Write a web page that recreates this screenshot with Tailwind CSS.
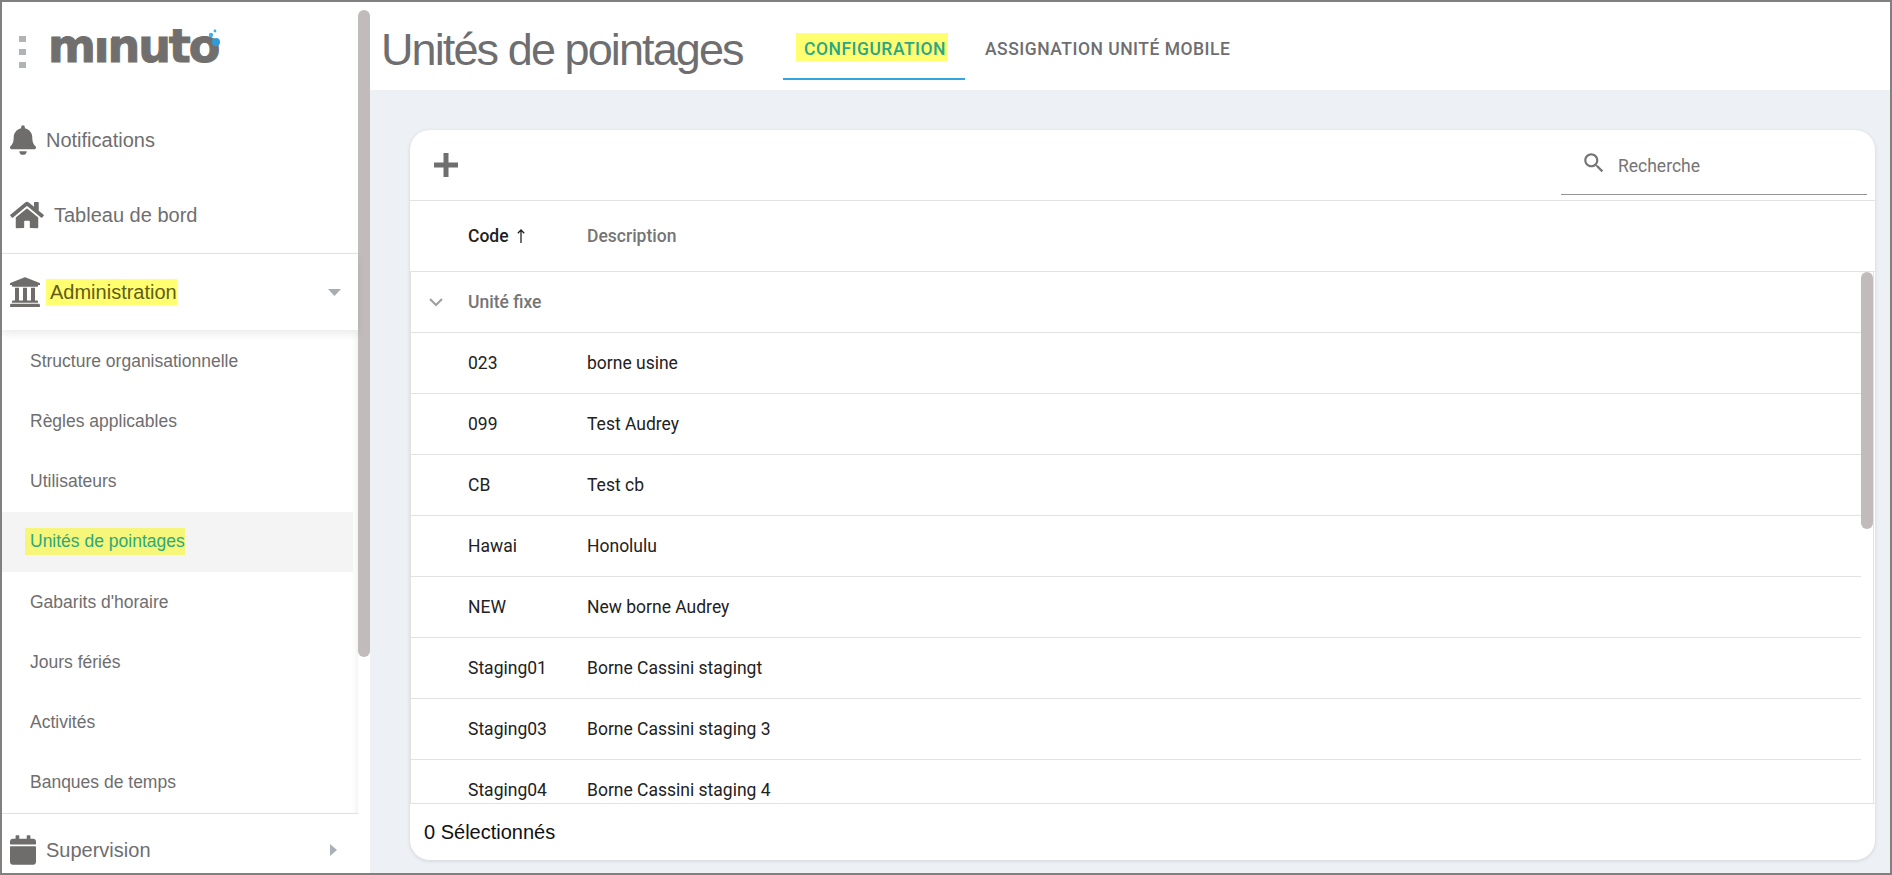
<!DOCTYPE html>
<html lang="fr">

<head>
    <meta charset="UTF-8">
    <title>Unités de pointages</title>
    <script src="https://cdn.jsdelivr.net/npm/@tailwindcss/browser@4"></script>
</head>

<body class="font-['Liberation_Sans',Arial,sans-serif]">
    <div class="w-[1892px] h-[875px] border-2 border-[#808080] flex overflow-hidden bg-white">

        <!-- sidebar -->
        <aside class="w-[368px] h-full flex shrink-0 bg-white">
            <nav class="w-[356px] flex flex-col text-[#6e6e70] text-[20px]">
                <div class="h-[100px] flex items-start relative">
                    <div class="ml-[17px] mt-[34px] flex flex-col gap-[7px]">
                        <div class="w-[7px] h-[6px] bg-[#b1b4b7]"></div>
                        <div class="w-[7px] h-[6px] bg-[#b1b4b7]"></div>
                        <div class="w-[7px] h-[6px] bg-[#b1b4b7]"></div>
                    </div>
                    <div class="ml-[22px] mt-[11px] relative w-[180px]">
                        <span class="block font-['DejaVu_Sans',sans-serif] font-bold text-[46px] leading-[66px] tracking-[-2.1px] [-webkit-text-stroke:1px_#716f6e] text-[#716f6e]">minuto</span>
                        <!-- the logo's i has no dot -->
                        <div class="absolute left-[44px] top-[10px] w-[20px] h-[15px] bg-white"></div>
                    </div>
                    <svg class="absolute left-[200px] top-[24px]" width="24" height="24" viewBox="0 0 24 24">
                        <circle cx="14" cy="16" r="4" fill="#2f9bdc"/>
                        <circle cx="9" cy="9" r="2.2" fill="#45ace4"/>
                        <circle cx="13" cy="5" r="1.4" fill="#45ace4"/>
                    </svg>
                </div>

                <a class="h-[76px] flex items-center pl-[8px]">
                    <svg class="w-[26px] h-[30px] mr-[10px]" viewBox="0 0 448 512" fill="#6e6d6c"><path d="M224 512c35.32 0 63.97-28.65 63.97-64H160.03c0 35.35 28.65 64 63.97 64zm215.39-149.71c-19.32-20.76-55.47-51.99-55.47-154.29 0-77.7-54.48-139.9-127.94-155.16V32c0-17.67-14.32-32-31.98-32s-31.98 14.33-31.98 32v20.84C118.56 68.1 64.08 130.3 64.08 208c0 102.3-36.15 133.53-55.47 154.29-6 6.45-8.66 14.16-8.61 21.71.11 16.4 12.98 32 32.1 32h383.8c19.12 0 32-15.6 32.1-32 .05-7.55-2.61-15.27-8.61-21.71z"/></svg>
                    <span>Notifications</span>
                </a>
                <a class="h-[75px] flex items-center pl-[8px] pb-[2px]">
                    <svg class="w-[34px] h-[30px] mr-[10px]" viewBox="0 0 576 512" fill="#6e6d6c"><path d="M280.37 148.26L96 300.11V464a16 16 0 0 0 16 16l112.06-.29a16 16 0 0 0 15.92-16V368a16 16 0 0 1 16-16h64a16 16 0 0 1 16 16v95.64a16 16 0 0 0 16 16.05L464 480a16 16 0 0 0 16-16V300L295.67 148.26a12.19 12.19 0 0 0-15.3 0zM571.6 251.47L488 182.56V44.05a12 12 0 0 0-12-12h-56a12 12 0 0 0-12 12v72.61L318.47 43a48 48 0 0 0-61 0L4.34 251.47a12 12 0 0 0-1.6 16.9l25.5 31A12 12 0 0 0 45.15 301l235.22-193.74a12.19 12.19 0 0 1 15.3 0L530.9 301a12 12 0 0 0 16.9-1.6l25.5-31a12 12 0 0 0-1.7-16.93z"/></svg>
                    <span>Tableau de bord</span>
                </a>

                <a class="h-[77px] flex items-center pl-[7px] border-t-[1.5px] border-[#dde3e8] relative z-10 shadow-[0_4px_8px_rgba(0,0,0,0.08)]">
                    <svg class="w-[32px] h-[34px] mr-[5px]" viewBox="0 0 512 512" preserveAspectRatio="none" fill="#6e6d6c"><path d="M496 128v16a8 8 0 0 1-8 8h-24v12c0 6.627-5.373 12-12 12H60c-6.627 0-12-5.373-12-12v-12H24a8 8 0 0 1-8-8v-16a8 8 0 0 1 4.941-7.392l232-88a7.996 7.996 0 0 1 6.118 0l232 88A8 8 0 0 1 496 128zm-24 304H40c-13.255 0-24 10.745-24 24v16a8 8 0 0 0 8 8h464a8 8 0 0 0 8-8v-16c0-13.255-10.745-24-24-24zM96 192v192H60c-6.627 0-12 5.373-12 12v20h416v-20c0-6.627-5.373-12-12-12h-36V192h-64v192h-64V192h-64v192h-64V192H96z"/></svg>
                    <span class="bg-[#ffff70] text-[#625d18] pl-[4px] h-[26px] leading-[26px]">Administration</span>
                    <svg class="ml-auto mr-[17px] w-[13px] h-[7px]" viewBox="0 0 13 7" fill="#a8adb3"><path d="M0 0h13L6.500 7z"/></svg>
                </a>

                <div class="h-[482.6px] pt-[1px] flex flex-col text-[17.5px] shadow-[inset_-6px_0_6px_-4px_rgba(0,0,0,0.06)]">
                    <a class="h-[60.2px] shrink-0 flex items-center pl-[28px]">Structure organisationnelle</a>
                    <a class="h-[60.2px] shrink-0 flex items-center pl-[28px]">Règles applicables</a>
                    <a class="h-[60.2px] shrink-0 flex items-center pl-[28px]">Utilisateurs</a>
                    <a class="h-[60.2px] shrink-0 flex items-center pl-[23px] mr-[5px] bg-[#f4f4f4]">
                        <span class="bg-[#f5f67a] text-[#2ea87c] pl-[5px] h-[27px] leading-[27px]">Unités de pointages</span>
                    </a>
                    <a class="h-[60.2px] shrink-0 flex items-center pl-[28px]">Gabarits d'horaire</a>
                    <a class="h-[60.2px] shrink-0 flex items-center pl-[28px]">Jours fériés</a>
                    <a class="h-[60.2px] shrink-0 flex items-center pl-[28px]">Activités</a>
                    <a class="h-[60.2px] shrink-0 flex items-center pl-[28px]">Banques de temps</a>
                </div>

                <a class="flex-1 flex items-start pl-[8px] pt-[21px] border-t border-[#dfe2e4]">
                    <svg class="w-[26px] h-[30px] mr-[10px]" viewBox="0 0 448 512" fill="#6e6d6c"><path d="M12 192h424c6.600 0 12 5.400 12 12v260c0 26.500-21.500 48-48 48H48c-26.500 0-48-21.500-48-48V204c0-6.600 5.400-12 12-12zm436-44v-36c0-26.500-21.500-48-48-48h-48V12c0-6.600-5.400-12-12-12h-40c-6.600 0-12 5.400-12 12v52H160V12c0-6.600-5.400-12-12-12h-40c-6.600 0-12 5.400-12 12v52H48C21.500 64 0 85.500 0 112v36c0 6.600 5.400 12 12 12h424c6.600 0 12-5.400 12-12z"/></svg>
                    <span class="leading-[30px]">Supervision</span>
                    <svg class="ml-auto mr-[21px] mt-[9px] w-[7px] h-[12px]" viewBox="0 0 7 12" fill="#a8b0b8"><path d="M0 0l7 6-7 6z"/></svg>
                </a>
            </nav>
            <div class="w-[12px] pt-[8px]">
                <div class="h-[647px] rounded-[6px] bg-[#c1bcbb]"></div>
            </div>
        </aside>

        <!-- main -->
        <main class="flex-1 flex flex-col bg-[#edf0f5] min-w-0">
            <header class="h-[88px] bg-white flex items-start shrink-0 pl-[11px] relative">
                <h1 class="w-[402px] mt-[19px] text-[45px] leading-[58px] tracking-[-1.9px] text-[#6e6e70] whitespace-nowrap">Unités de pointages</h1>
                <div class="flex font-['Roboto',sans-serif] font-medium text-[17.5px]">
                    <div class="w-[182px] h-[78px] border-b-2 border-[#35a3dc] pl-[13px] pt-[31px]">
                        <span class="inline-block bg-[#ffff70] text-[#2aa784] pl-[8px] pr-[2px] h-[28px] leading-[33px] tracking-[0.5px] whitespace-nowrap">CONFIGURATION</span>
                    </div>
                    <div class="pl-[20px] pt-[31px] h-[78px] text-[#6e6e70]">
                        <span class="inline-block h-[28px] leading-[33px] tracking-[0.5px] whitespace-nowrap">ASSIGNATION UNITÉ MOBILE</span>
                    </div>
                </div>
            </header>

            <div class="flex-1 pl-[40px] pr-[15px] pt-[40px] pb-[13px] min-h-0">
                <section class="h-full bg-white rounded-[20px] shadow-[0_1px_4px_rgba(0,0,0,0.12)] flex flex-col overflow-hidden font-['Roboto',sans-serif] text-[17.5px] text-[#222]">
                    <div class="h-[71px] shrink-0 flex items-start border-b border-[#e2e2e2]">
                        <svg class="ml-[24px] mt-[23px] w-[24px] h-[24px]" viewBox="0 0 24 24" fill="#6f6f6f"><path d="M9.500 0h5v9.500H24v5h-9.500V24h-5v-9.500H0v-5h9.500z"/></svg>
                        <div class="ml-auto mr-[8px] w-[306px] h-[65px] border-b border-[#949494] flex items-start pl-[20px] pt-[20px]">
                            <svg class="w-[26px] h-[26px] mr-[11px]" viewBox="0 0 24 24" fill="#757575"><path d="M15.500 14h-.79l-.28-.27C15.410 12.590 16 11.110 16 9.500 16 5.910 13.090 3 9.500 3S3 5.910 3 9.500 5.910 16 9.500 16c1.610 0 3.090-.59 4.230-1.570l.27.28v.79l5 4.990L20.490 19l-4.990-5zm-6 0C7.010 14 5 11.990 5 9.500S7.010 5 9.500 5 14 7.010 14 9.500 11.990 14 9.500 14z"/></svg>
                            <span class="leading-[32px] text-[#757575]">Recherche</span>
                        </div>
                    </div>

                    <div class="h-[71px] shrink-0 flex items-center border-b border-[#e2e2e2] pl-[58px] font-medium">
                        <div class="w-[119px] flex items-center text-[#222]">
                            Code
                            <svg class="ml-[8px] w-[8px] h-[14px]" viewBox="0 0 8 14" fill="none" stroke="#222" stroke-width="1.300"><path d="M4 14V1M.8 4.200 4 1l3.200 3.200"/></svg>
                        </div>
                        <div class="text-[#757575]">Description</div>
                    </div>

                    <div class="flex-1 min-h-0 flex border-x border-[#e2e2e2] mr-[1px]">
                        <div class="flex-1 min-w-0 overflow-hidden">
                            <div class="h-[61px] flex items-center border-b border-[#e2e2e2] font-medium text-[#757575]">
                                <svg class="ml-[18px] mr-[25px] w-[14px] h-[9px]" viewBox="0 0 14 9" fill="none" stroke="#9e9e9e" stroke-width="2"><path d="M1 1l6 6 6-6"/></svg>
                                Unité fixe
                            </div>
                            <div class="h-[61px] flex items-center border-b border-[#e2e2e2] pl-[57px]"><div class="w-[119px]">023</div><div>borne usine</div></div>
                            <div class="h-[61px] flex items-center border-b border-[#e2e2e2] pl-[57px]"><div class="w-[119px]">099</div><div>Test Audrey</div></div>
                            <div class="h-[61px] flex items-center border-b border-[#e2e2e2] pl-[57px]"><div class="w-[119px]">CB</div><div>Test cb</div></div>
                            <div class="h-[61px] flex items-center border-b border-[#e2e2e2] pl-[57px]"><div class="w-[119px]">Hawai</div><div>Honolulu</div></div>
                            <div class="h-[61px] flex items-center border-b border-[#e2e2e2] pl-[57px]"><div class="w-[119px]">NEW</div><div>New borne Audrey</div></div>
                            <div class="h-[61px] flex items-center border-b border-[#e2e2e2] pl-[57px]"><div class="w-[119px]">Staging01</div><div>Borne Cassini stagingt</div></div>
                            <div class="h-[61px] flex items-center border-b border-[#e2e2e2] pl-[57px]"><div class="w-[119px]">Staging03</div><div>Borne Cassini staging 3</div></div>
                            <div class="h-[61px] flex items-center pl-[57px]"><div class="w-[119px]">Staging04</div><div>Borne Cassini staging 4</div></div>
                        </div>
                        <div class="w-[12px] shrink-0">
                            <div class="h-[257px] rounded-[6px] bg-[#c1bcbb]"></div>
                        </div>
                    </div>

                    <div class="h-[57px] shrink-0 border-t border-[#e2e2e2] flex items-center pl-[14px] font-['Liberation_Sans',Arial,sans-serif] text-[20px] text-[#111]">0 Sélectionnés</div>
                </section>
            </div>
        </main>
    </div>
</body>

</html>
